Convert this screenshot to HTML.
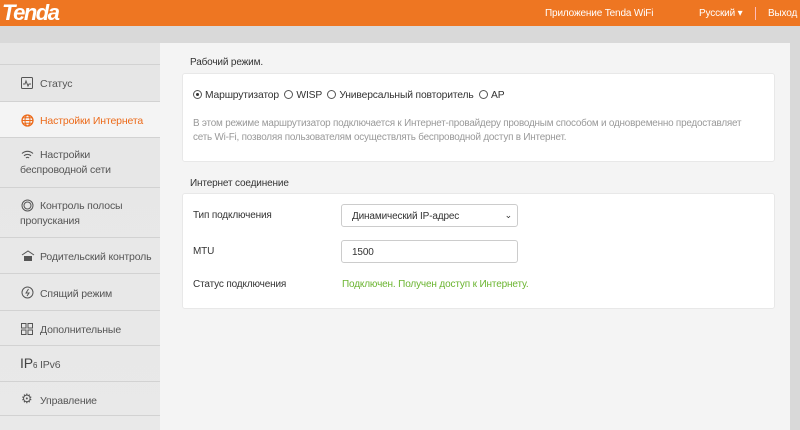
<!DOCTYPE html>
<html><head><meta charset="utf-8"><style>
*{margin:0;padding:0;box-sizing:border-box}
body{width:800px;height:430px;overflow:hidden;background:#d9d9d9;font-family:"Liberation Sans",Arial,sans-serif;font-size:10px;color:#333;position:relative;letter-spacing:-0.15px}
.hdr{position:absolute;left:0;top:0;width:800px;height:26px;background:#ee7622;color:#fff}
.logo{position:absolute;left:2px;top:0px;font-size:22px;font-weight:bold;font-style:italic;letter-spacing:-1.5px;color:#fff}
.hdr span{position:absolute;top:8px;font-size:10px;white-space:nowrap}
.side{position:absolute;left:0;top:43px;width:160px;height:387px;background:linear-gradient(#e6e6e6,#e9e9e9)}
.it{position:absolute;left:0;width:160px;border-top:1px solid #d2d2d2;color:#555;font-size:10.5px;white-space:nowrap}
.it .t{position:absolute;left:20px}
.act{background:#f4f4f4;color:#ec6b1b}
.main{position:absolute;left:160px;top:43px;width:630px;height:387px;background:#f4f4f4}
.card{position:absolute;left:22px;width:593px;background:#fff;border:1px solid #e8e8e8;border-radius:3px}
.lbl{position:absolute;left:30px;font-size:10px;color:#333}
.rad{display:inline-block;width:9px;height:9px;border:1px solid #555;border-radius:50%;vertical-align:-1px;margin-right:3px;position:relative}
.rad.on::after{content:"";position:absolute;left:2px;top:2px;width:3px;height:3px;background:#333;border-radius:50%}
.box{position:absolute;left:158px;width:177px;height:23px;border:1px solid #ccc;border-radius:3px;padding:6px 10px;font-size:10px}
</style></head><body>
<div class="hdr"><div class="logo">Tenda</div>
<span style="left:545px">Приложение Tenda WiFi</span>
<span style="left:699px">Русский ▾</span>
<div style="position:absolute;left:755px;top:7px;width:1px;height:13px;background:#fbb"></div>
<span style="left:768px">Выход</span></div>
<div class="side">
<div class="it" style="top:21px;height:37px"><svg style="position:absolute;left:21px;top:12px" width="12" height="12"><rect x=".5" y=".5" width="11" height="11" rx="1" fill="none" stroke="#555"/><path d="M2 7h2l1-3 2 5 1-2h2" fill="none" stroke="#555"/></svg><span class="t" style="left:40px;top:13px">Статус</span></div>
<div class="it act" style="top:58px;height:36px"><svg style="position:absolute;left:21px;top:12px" width="13" height="13"><circle cx="6.5" cy="6.5" r="5.5" fill="none" stroke="#ec6b1b" stroke-width="1.3"/><ellipse cx="6.5" cy="6.5" rx="2.5" ry="5.5" fill="none" stroke="#ec6b1b"/><path d="M1 6.5h11M2 3.8h9M2 9.2h9" stroke="#ec6b1b"/></svg><span class="t" style="left:40px;top:13px">Настройки Интернета</span></div>
<div class="it" style="top:94px;height:50px"><svg style="position:absolute;left:21px;top:12px" width="13" height="10"><path d="M1 3.5a8 8 0 0 1 11 0M3 5.8a5 5 0 0 1 7 0M5 8a2 2 0 0 1 3 0" fill="none" stroke="#555" stroke-width="1.1"/></svg><span class="t" style="left:40px;top:11px">Настройки</span><span class="t" style="top:26px">беспроводной сети</span></div>
<div class="it" style="top:144px;height:50px"><svg style="position:absolute;left:21px;top:11px" width="13" height="13"><circle cx="6.5" cy="6.5" r="5.5" fill="none" stroke="#555"/><circle cx="6.5" cy="6.5" r="3.5" fill="none" stroke="#555"/></svg><span class="t" style="left:40px;top:12px">Контроль полосы</span><span class="t" style="top:27px">пропускания</span></div>
<div class="it" style="top:194px;height:36px"><svg style="position:absolute;left:21px;top:12px" width="14" height="12"><path d="M1 5L7 1l6 4" fill="none" stroke="#555"/><rect x="3" y="6" width="8" height="5" fill="#555"/></svg><span class="t" style="left:40px;top:13px">Родительский контроль</span></div>
<div class="it" style="top:230px;height:37px"><svg style="position:absolute;left:21px;top:12px" width="13" height="13"><circle cx="6.5" cy="6.5" r="5.5" fill="none" stroke="#555"/><path d="M7.5 3L5 7h3l-2 3" fill="none" stroke="#555"/></svg><span class="t" style="left:40px;top:14px">Спящий режим</span></div>
<div class="it" style="top:267px;height:35px"><svg style="position:absolute;left:21px;top:12px" width="12" height="12"><rect x=".5" y=".5" width="4.5" height="4.5" fill="none" stroke="#555"/><rect x="7" y=".5" width="4.5" height="4.5" fill="none" stroke="#555"/><rect x=".5" y="7" width="4.5" height="4.5" fill="none" stroke="#555"/><rect x="7" y="7" width="4.5" height="4.5" fill="none" stroke="#555"/></svg><span class="t" style="left:40px;top:13px">Дополнительные</span></div>
<div class="it" style="top:302px;height:36px"><span style="position:absolute;left:20px;top:9px;font-size:14px;color:#444">IP<small style="font-size:8px">6</small></span><span class="t" style="left:40px;top:13px">IPv6</span></div>
<div class="it" style="top:338px;height:35px;border-bottom:1px solid #d2d2d2"><span style="position:absolute;left:21px;top:9px;font-size:13px">⚙</span><span class="t" style="left:40px;top:13px">Управление</span></div>
</div>
<div class="main">
<div class="lbl" style="top:14px">Рабочий режим.</div>
<div class="card" style="top:30px;height:89px">
<div style="position:absolute;left:10px;top:16px;font-size:10.3px;white-space:nowrap"><span class="rad on"></span>Маршрутизатор &nbsp;<span class="rad"></span>WISP &nbsp;<span class="rad"></span>Универсальный повторитель &nbsp;<span class="rad"></span>AP</div>
<div style="position:absolute;left:10px;top:43px;color:#999;font-size:9.9px;line-height:14px;white-space:nowrap;letter-spacing:-0.2px">В этом режиме маршрутизатор подключается к Интернет-провайдеру проводным способом и одновременно предоставляет<br>сеть Wi-Fi, позволяя пользователям осуществлять беспроводной доступ в Интернет.</div>
</div>
<div class="lbl" style="top:135px">Интернет соединение</div>
<div class="card" style="top:150px;height:116px">
<div style="position:absolute;left:10px;top:16px">Тип подключения</div>
<div class="box" style="top:10px">Динамический IP-адрес<span style="position:absolute;right:5px;top:5px;font-size:9px">⌄</span></div>
<div style="position:absolute;left:10px;top:52px">MTU</div>
<div class="box" style="top:46px">1500</div>
<div style="position:absolute;left:10px;top:85px">Статус подключения</div>
<div style="position:absolute;left:159px;top:85px;color:#6ab42f">Подключен. Получен доступ к Интернету.</div>
</div>
</div>
</body></html>
